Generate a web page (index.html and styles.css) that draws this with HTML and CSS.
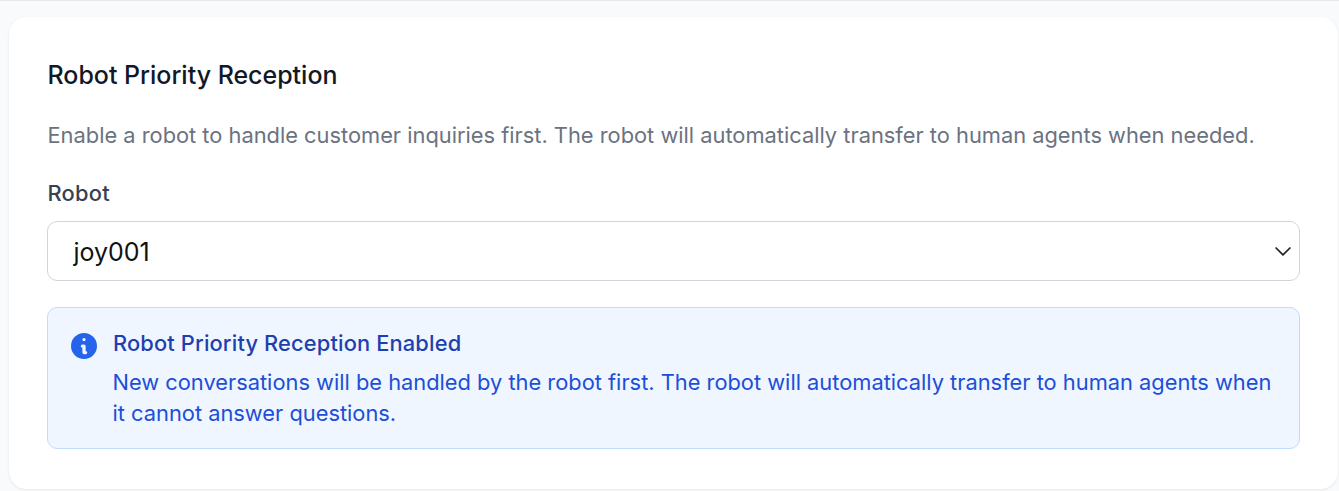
FILE: index.html
```html
<!DOCTYPE html>
<html lang="en">
<head>
    <meta charset="UTF-8">
    <title>Robot Priority Reception</title>
    <link rel="stylesheet" href="styles.css">
</head>
<body>
    <div class="card">
        <h2 class="card-title">Robot Priority Reception</h2>
        <p class="card-desc">Enable a robot to handle customer inquiries first. The robot will automatically transfer to human agents when needed.</p>

        <div class="form-control">
            <label class="form-label">Robot</label>
            <div class="select-box">
                <span class="select-value">joy001</span>
                <svg class="select-arrow" viewBox="0 0 18 12" width="18" height="12">
                    <path d="M1.6 2.5 L9 9.9 L16.4 2.5" fill="none" stroke="#222" stroke-width="1.7"/>
                </svg>
            </div>
        </div>

        <div class="notice">
            <svg class="notice-icon" viewBox="2 2 16 16" width="26" height="26">
                <path fill-rule="evenodd" clip-rule="evenodd" fill="#2563eb" d="M18 10a8 8 0 1 1-16 0 8 8 0 0 1 16 0zm-7-4a1 1 0 1 1-2 0 1 1 0 0 1 2 0zM9 9a1 1 0 0 0 0 2v3a1 1 0 0 0 1 1h1a1 1 0 1 0 0-2v-3a1 1 0 0 0-1-1H9z"/>
            </svg>
            <div class="notice-body">
                <div class="notice-title">Robot Priority Reception Enabled</div>
                <div class="notice-text">New conversations will be handled by the robot first. The robot will automatically transfer to human agents when it cannot answer questions.</div>
            </div>
        </div>
    </div>
</body>
</html>
```

FILE: styles.css
```css
html, body {
    height: 100%;
}

body {
    margin: 0;
    padding: 16px 1px 0 9px;
    box-sizing: border-box;
    overflow: hidden;
    background-color: #f9fafb;
    border-top: 1px solid #e5e7eb;
    font-family: "Inter", sans-serif;
}

.card {
    background-color: #fff;
    border-radius: 18px;
    box-shadow: 0 1px 3px rgba(0, 0, 0, 0.08);
    padding: 40px 38px 40px 38px;
    height: 472px;
    box-sizing: border-box;
}

.card-title {
    margin: 0 0 25px;
    padding-left: 0.5px;
    font-size: 24.96px;
    line-height: 36px;
    font-weight: 500;
    color: #111827;
}

.card-desc {
    margin: 0 0 25px;
    padding-left: 0.5px;
    font-size: 21.84px;
    line-height: 34px;
    color: #6b7280;
}

.form-label {
    display: block;
    margin-bottom: 12px;
    padding-left: 0.5px;
    font-size: 21.84px;
    line-height: 32px;
    font-weight: 500;
    letter-spacing: 0.25px;
    color: #374151;
}

.select-box {
    display: flex;
    align-items: center;
    justify-content: space-between;
    height: 60px;
    box-sizing: border-box;
    padding: 0 7px 0 25.5px;
    border: 1px solid #d1d5db;
    border-radius: 10px;
}

.select-value {
    padding-top: 2px;
    font-size: 24.96px;
    color: #111;
}

.notice {
    display: flex;
    gap: 16px;
    margin-top: 26px;
    padding: 19px 24px 20px 23px;
    height: 142px;
    box-sizing: border-box;
    background-color: #eff6ff;
    border: 1px solid #bfdbfe;
    border-radius: 10px;
}

.notice-icon {
    flex-shrink: 0;
    margin-top: 6px;
}

.notice-title {
    font-size: 21.84px;
    line-height: 32px;
    font-weight: 500;
    letter-spacing: 0.15px;
    color: #1e40af;
    margin-bottom: 8px;
}

.notice-text {
    margin-left: -0.5px;
    font-size: 21.84px;
    line-height: 31px;
    color: #1d4ed8;
}
```
